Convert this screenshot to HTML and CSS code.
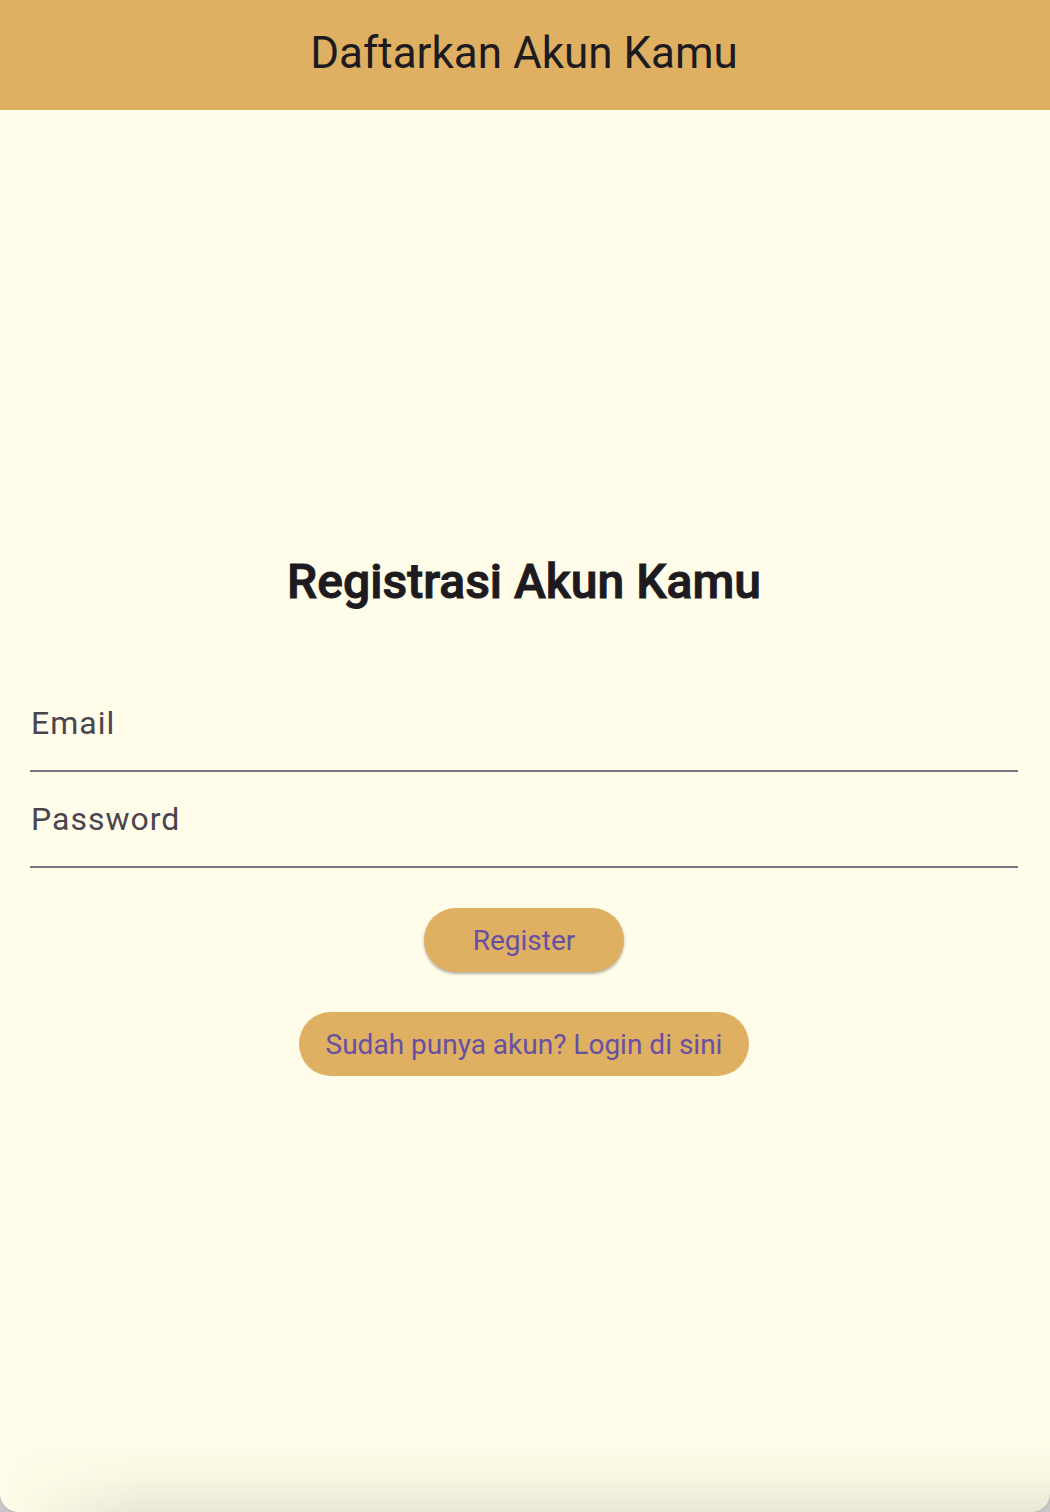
FILE: index.html
```html
<!DOCTYPE html>
<html lang="id">
<head>
<meta charset="utf-8">
<meta name="viewport" content="width=device-width, initial-scale=1">
<title>Daftarkan Akun Kamu</title>
<link rel="stylesheet" href="styles.css">
</head>
<body>
<div class="window">
  <header class="app-bar">
    <h1 class="app-title">Daftarkan Akun Kamu</h1>
  </header>
  <main class="content">
    <h2 class="heading">Registrasi Akun Kamu</h2>
    <form class="form">
      <div class="field">
        <label class="label" for="email">Email</label>
        <input class="input" id="email" type="email">
      </div>
      <div class="field">
        <label class="label" for="password">Password</label>
        <input class="input" id="password" type="password">
      </div>
      <div class="actions">
        <button class="button button-raised" type="submit">Register</button>
        <button class="button" type="button">Sudah punya akun? Login di sini</button>
      </div>
    </form>
  </main>
</div>
</body>
</html>
```
FILE: styles.css
```css
* {
  box-sizing: border-box;
}

body {
  margin: 0;
  background: #c8c8c8;
  color: #1d1b20;
  font-family: Roboto, "Liberation Sans", sans-serif;
}

.window {
  position: relative;
  display: flex;
  flex-direction: column;
  min-height: 100vh;
  overflow: hidden;
  background: #fffce9;
  border-radius: 0 0 18px 18px;
  box-shadow: 0 0 2px #888;
}

/* Soft shade along the bottom edge of the window */
.window::after {
  content: "";
  position: absolute;
  inset: auto 0 0;
  height: 72px;
  background: linear-gradient(rgba(60, 70, 50, 0), rgba(60, 70, 50, 0.03) 50%, rgba(60, 70, 50, 0.11));
  mask-image: linear-gradient(90deg, transparent, #000 140px);
  pointer-events: none;
}

.app-bar {
  display: flex;
  justify-content: center;
  padding: 25px 32px 29px 30px;
  background: #dfaf62;
}

.app-title {
  margin: 0;
  font-size: 44px;
  font-weight: 400;
  line-height: 56px;
}

.content {
  flex: 1;
  display: flex;
  flex-direction: column;
  justify-content: center;
  gap: 60px;
  padding: 2px 32px 0 30px;
}

.heading {
  margin: 0;
  font-size: 48px;
  font-weight: 500;
  line-height: 68px;
  text-align: center;
  -webkit-text-stroke: 1px currentColor;
}

.field {
  position: relative;
}

.label {
  position: absolute;
  inset: 23px auto auto 0;
  padding-left: 1px;
  color: #49454f;
  font-size: 32px;
  line-height: 48px;
  letter-spacing: 1px;
  pointer-events: none;
}

.input {
  display: block;
  width: 100%;
  height: 96px;
  padding: 24px 0;
  border: 0;
  border-bottom: 2px solid #79747e;
  border-radius: 0;
  outline: 0;
  background: transparent;
  color: inherit;
  font: inherit;
  font-size: 32px;
}

.actions {
  display: flex;
  flex-direction: column;
  align-items: center;
  gap: 40px;
  padding-top: 40px;
}

.button {
  height: 64px;
  padding: 2px 27px 0;
  border: 0;
  border-radius: 32px;
  background: #dfaf62;
  color: #6750a4;
  font: inherit;
  font-size: 28px;
  line-height: 40px;
}

.button-raised {
  padding: 2px 49px 0;
  box-shadow: 0 2px 3px rgba(0, 0, 0, 0.3);
}
```
